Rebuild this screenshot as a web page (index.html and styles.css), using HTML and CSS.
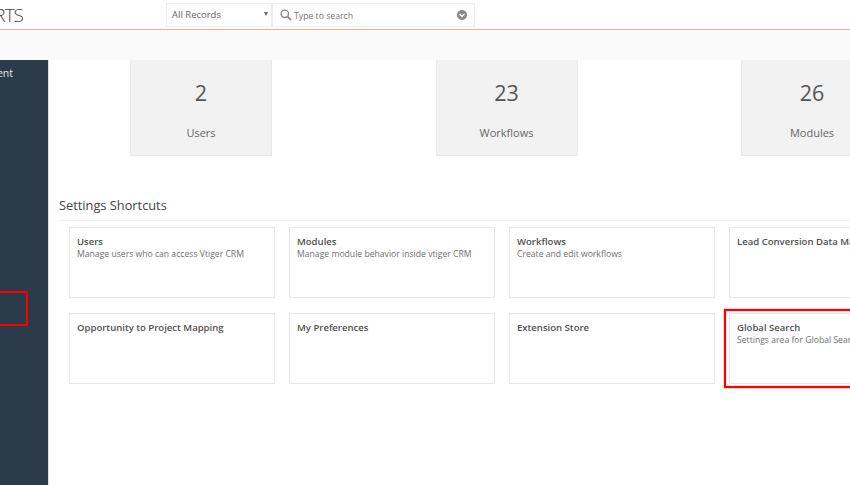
FILE: index.html
```html
<!DOCTYPE html>
<html lang="en">
<head>
    <meta charset="UTF-8">
    <meta name="viewport" content="width=device-width, initial-scale=1.0">
    <title>Settings</title>
    <link rel="stylesheet" href="styles.css">
</head>
<body>
    <header class="topbar">
        <div class="logo"><span>REPORTS</span></div>
        <div class="search">
            <div class="search-scope">
                <span>All Records</span>
                <span class="caret"></span>
            </div>
            <div class="search-box">
                <svg class="search-icon" width="12" height="12" viewBox="0 0 13 13" fill="none" stroke="#888" stroke-width="1.5">
                    <circle cx="5.2" cy="5.2" r="4"/>
                    <path d="M8.2 8.2 12 12" stroke-width="2"/>
                </svg>
                <span class="search-text">Type to search</span>
                <svg class="search-more" width="10" height="10" viewBox="0 0 10 10">
                    <circle cx="5" cy="5" r="5" fill="#888"/>
                    <path d="M2.6 4 5 6.4 7.4 4" fill="none" stroke="#fff" stroke-width="1.4"/>
                </svg>
            </div>
        </div>
    </header>
    <div class="subbar"></div>

    <div class="layout">
        <aside class="sidebar">
            <div class="side-item"><span>Management</span></div>
        </aside>

        <main class="content">
            <div class="stats">
                <div class="stat">
                    <div class="stat-num">2</div>
                    <div class="stat-label">Users</div>
                </div>
                <div class="stat">
                    <div class="stat-num">23</div>
                    <div class="stat-label">Workflows</div>
                </div>
                <div class="stat">
                    <div class="stat-num">26</div>
                    <div class="stat-label">Modules</div>
                </div>
            </div>

            <h3 class="section-title">Settings Shortcuts</h3>
            <div class="shortcuts">
                <div class="shortcut">
                    <div class="shortcut-name">Users</div>
                    <div class="shortcut-desc">Manage users who can access Vtiger CRM</div>
                </div>
                <div class="shortcut">
                    <div class="shortcut-name">Modules</div>
                    <div class="shortcut-desc">Manage module behavior inside vtiger CRM</div>
                </div>
                <div class="shortcut">
                    <div class="shortcut-name">Workflows</div>
                    <div class="shortcut-desc">Create and edit workflows</div>
                </div>
                <div class="shortcut">
                    <div class="shortcut-name">Lead Conversion Data Mapping</div>
                </div>
                <div class="shortcut">
                    <div class="shortcut-name">Opportunity to Project Mapping</div>
                </div>
                <div class="shortcut">
                    <div class="shortcut-name">My Preferences</div>
                </div>
                <div class="shortcut">
                    <div class="shortcut-name">Extension Store</div>
                </div>
                <div class="shortcut">
                    <div class="shortcut-name">Global Search</div>
                    <div class="shortcut-desc">Settings area for Global Search</div>
                </div>
            </div>
        </main>
    </div>

    <!-- red annotation boxes drawn over the screenshot -->
    <div class="mark mark-side"></div>
    <div class="mark mark-card"></div>
</body>
</html>
```

FILE: styles.css
```css
html, body {
    height: 100%;
}
body {
    font-family: "Open Sans", sans-serif;
    background-color: #fff;
    color: #555;
    margin: 0;
    padding: 0;
    overflow: hidden;
    position: relative;
}
.topbar {
    height: 29px;
    border-bottom: 1px solid #f9ae93;
    display: flex;
    align-items: flex-start;
}
.logo {
    width: 23px;
    overflow: hidden;
    display: flex;
    justify-content: flex-end;
    font-size: 19px;
    line-height: 26px;
    letter-spacing: -1px;
    color: #444;
    font-weight: 300;
    margin-top: 2px;
}
.search {
    margin-left: 143px;
    margin-top: 3px;
    display: flex;
    height: 24px;
    width: 309px;
    border: 1px solid #eee;
    box-sizing: border-box;
}
.search-scope {
    width: 106px;
    display: flex;
    align-items: center;
    justify-content: space-between;
    padding: 0 3px 2px 5px;
    box-sizing: border-box;
    border-right: 2px solid #eee;
    font-size: 9.5px;
    color: #666;
}
.caret {
    width: 0;
    height: 0;
    border-left: 2.5px solid transparent;
    border-right: 2.5px solid transparent;
    border-top: 4px solid #666;
}
.search-box {
    flex: 1;
    display: flex;
    align-items: center;
    padding: 0 7px;
}
.search-text {
    flex: 1;
    margin-left: 2px;
    padding-top: 1px;
    font-size: 8.7px;
    color: #777;
}
.subbar {
    height: 30px;
    background-color: #fafafa;
}
.layout {
    display: flex;
    height: 425px;
}
.sidebar {
    width: 48px;
    background-color: #2c3b49;
    border-right: 1px solid #ddd;
    flex-shrink: 0;
}
.side-item {
    width: 13px;
    overflow: hidden;
    display: flex;
    justify-content: flex-end;
    margin-top: 5px;
    color: #e4e7ea;
    font-size: 10.5px;
    line-height: 16px;
}
.content {
    flex: 1;
    min-width: 0;
    padding-left: 10px;
}
.stats {
    display: flex;
    gap: 163.5px;
    padding-left: 71px;
    width: 1000px;
}
.stat {
    width: 142px;
    height: 96px;
    box-sizing: border-box;
    flex-shrink: 0;
    background-color: #f2f2f2;
    border: 1px solid #eaeaea;
    border-top: none;
    text-align: center;
}
.stat-num {
    font-size: 21.5px;
    line-height: 30px;
    margin-top: 18px;
    color: #555;
}
.stat-label {
    font-size: 11px;
    line-height: 16px;
    margin-top: 17px;
    color: #666;
}
.section-title {
    font-size: 12.8px;
    font-weight: 400;
    line-height: 18px;
    color: #444;
    margin: 40px 0 0;
    padding-bottom: 6px;
    border-bottom: 1px solid #f2f2f2;
    width: 1000px;
}
.shortcuts {
    display: grid;
    grid-template-columns: repeat(4, 206px);
    grid-auto-rows: 71px;
    column-gap: 14px;
    row-gap: 15px;
    margin: 6px 0 0 10px;
    width: 900px;
}
.shortcut {
    border: 1px solid #e8e8e8;
    box-sizing: border-box;
    padding: 7px 7px 0;
    background-color: #fff;
    white-space: nowrap;
}
.shortcut-name {
    font-size: 9.55px;
    line-height: 13px;
    font-weight: 600;
    color: #505050;
}
.shortcut-desc {
    font-size: 8.65px;
    line-height: 12px;
    color: #707070;
}
.mark {
    position: absolute;
    border: 2px solid #f00;
    box-sizing: border-box;
}
.mark-side {
    left: -4px;
    top: 291px;
    width: 32px;
    height: 35px;
}
.mark-card {
    left: 724px;
    top: 309px;
    width: 140px;
    height: 79px;
    box-shadow: 0 0 1px #f00, inset 0 0 1px #f00;
}
```
